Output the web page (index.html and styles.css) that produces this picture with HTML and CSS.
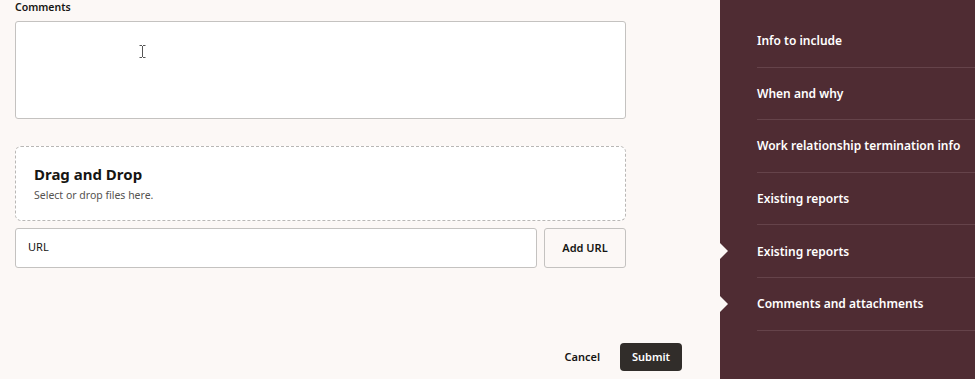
FILE: index.html
```html
<!DOCTYPE html>
<html lang="en">
<head>
    <meta charset="UTF-8">
    <meta name="viewport" content="width=device-width, initial-scale=1.0">
    <title>Comments and attachments</title>
    <link rel="stylesheet" href="styles.css">
</head>
<body>
    <div class="page">
        <main class="content">
            <label class="field-label" for="comments">Comments</label>
            <div class="comment-box">
                <textarea id="comments" class="comments"></textarea>
                <svg class="ibeam" width="7" height="13" viewBox="0 0 7 13">
                    <path d="M0.5 0.5h2.5M4 0.5h2.5M3.5 1v11M0.5 12.5h2.5M4 12.5h2.5" stroke="#555" stroke-width="1" fill="none"/>
                </svg>
            </div>

            <div class="dropzone">
                <div class="drop-title">Drag and Drop</div>
                <div class="drop-text">Select or drop files here.</div>
            </div>

            <div class="url-row">
                <div class="url-input">URL</div>
                <button class="add-url">Add URL</button>
            </div>

            <div class="actions">
                <button class="cancel">Cancel</button>
                <button class="submit">Submit</button>
            </div>
        </main>

        <aside class="sidebar">
            <ul class="steps">
                <li>Info to include</li>
                <li>When and why</li>
                <li>Work relationship termination info</li>
                <li>Existing reports</li>
                <li class="current">Existing reports</li>
                <li class="current">Comments and attachments</li>
            </ul>
        </aside>
    </div>
</body>
</html>
```

FILE: styles.css
```css
body {
    margin: 0;
    background-color: #fcf8f6;
    color: #161513;
    font-family: "Noto Sans", "Open Sans", sans-serif;
}

.page {
    display: flex;
    height: 379px;
    overflow: hidden;
}

.content {
    width: 611px;
    padding: 0 94px 0 15px;
    display: flex;
    flex-direction: column;
}

.field-label {
    font-size: 10.5px;
    font-weight: 600;
    line-height: 14px;
    margin-bottom: 7px;
}

.comment-box {
    position: relative;
}

.comments {
    display: block;
    box-sizing: border-box;
    width: 100%;
    height: 98px;
    margin: 0;
    background: #fff;
    border: 1px solid #c4c2c0;
    border-radius: 3px;
    resize: none;
}

.ibeam {
    position: absolute;
    left: 124px;
    top: 24px;
}

.dropzone {
    box-sizing: border-box;
    height: 75px;
    margin-top: 27px;
    padding: 16px 18px 0;
    background: #fff;
    border: 1px dashed #b9b7b5;
    border-radius: 6px;
}

.drop-title {
    font-size: 15px;
    font-weight: 700;
    line-height: 22px;
}

.drop-text {
    font-size: 10.5px;
    color: #555250;
    line-height: 16px;
    margin-top: 2px;
}

.url-row {
    display: flex;
    gap: 7px;
    margin-top: 7px;
    height: 40px;
}

.url-input {
    flex: 1;
    box-sizing: border-box;
    padding: 0 0 3px 12px;
    display: flex;
    align-items: center;
    font-size: 11px;
    background: #fff;
    border: 1px solid #c4c2c0;
    border-radius: 3px;
}

.add-url {
    width: 82px;
    background: #fcf8f6;
    border: 1px solid #c4c2c0;
    border-radius: 3px;
    font-family: inherit;
    font-size: 11px;
    font-weight: 600;
    color: #161513;
    padding-bottom: 2px;
}

.actions {
    display: flex;
    justify-content: flex-end;
    align-items: center;
    gap: 20px;
    margin-top: 75px;
    margin-right: -56px;
}

.actions button {
    font-family: inherit;
    font-size: 11px;
    font-weight: 600;
    border: none;
    cursor: pointer;
}

.cancel {
    background: none;
    color: #161513;
    padding: 0 0 2px;
}

.submit {
    background: #312d2a;
    color: #fff;
    width: 62px;
    height: 28px;
    border-radius: 4px;
    padding-bottom: 2px;
}

.sidebar {
    flex: 1;
    background-color: #4f2c33;
    color: #fff;
}

.steps {
    list-style: none;
    margin: 0;
    padding: 15px 0 0 37px;
}

.steps li {
    position: relative;
    height: 51.6px;
    display: flex;
    align-items: center;
    font-size: 12px;
    font-weight: 600;
    border-bottom: 1px solid #65434a;
}

.steps li.current::before {
    content: "";
    position: absolute;
    left: -37px;
    top: 18px;
    border-top: 8px solid transparent;
    border-bottom: 8px solid transparent;
    border-left: 8px solid #fcf8f6;
}
```
